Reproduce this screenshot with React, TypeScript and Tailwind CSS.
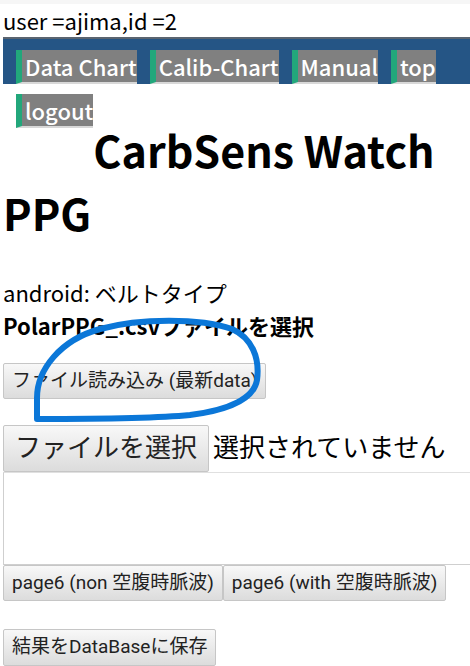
const navItems = ["Data Chart", "Calib-Chart", "Manual", "top", "logout"];

function Btn({ children, className = "" }: { children: React.ReactNode; className?: string }) {
  return (
    <button
      className={`border border-[#c6c6c6] rounded-[2px] bg-gradient-to-b from-[#f8f8f8] to-[#dcdcdc] text-[#222] font-['Roboto','Noto_Sans_CJK_JP',sans-serif] ${className}`}
    >
      {children}
    </button>
  );
}

export default function App() {
  return (
    <div className="relative w-[470px] h-[666px] overflow-hidden bg-white text-black font-['Noto_Sans_CJK_JP','Noto_Sans',sans-serif]">
      <div className="h-[4px] bg-[#f6f6f6]" />
      <p className="pl-[3px] text-[22px] leading-[33px]">user =ajima,id =2</p>
      <nav className="ml-[3px] h-[47px] bg-[#255585] border-t-2 border-[#5a6470] pt-[11px]">
        <ul>
          {navItems.map((item) => (
            <li
              key={item}
              className="float-left ml-[13px] mb-[10px] border-l-[6px] border-b-2 border-l-[#22a77b] border-b-[#d8d8d8] bg-[#808080] pl-[3px] text-[22px] leading-[32px] font-medium text-white"
            >
              {item}
            </li>
          ))}
        </ul>
      </nav>
      <h1 className="mt-[34px] pl-[3px] text-[43px] leading-[63px] font-bold">CarbSens Watch PPG</h1>
      <div className="mt-[32px] pl-[3px] text-[22px] leading-[33px]">
        <p>android: ベルトタイプ</p>
        <p className="font-bold">PolarPPG_.csvファイルを選択</p>
      </div>
      <div className="mt-[21px] pl-[3px]">
        <Btn className="h-[36px] px-[8px] text-[19px]">ファイル読み込み (最新data)</Btn>
      </div>
      <div className="mt-[26px] pl-[3px] flex items-center">
        <Btn className="h-[47px] px-[11px] text-[26px]">ファイルを選択</Btn>
        <span className="ml-[4px] text-[26px] font-['Roboto','Noto_Sans_CJK_JP',sans-serif]">選択されていません</span>
      </div>
      <div className="ml-[3px] h-[93px] w-[480px] border border-[#cfcfcf] border-t-[#e0e0e0]" />
      <div className="pl-[3px] flex">
        <Btn className="h-[36px] px-[8px] text-[19px]">page6 (non 空腹時脈波)</Btn>
        <Btn className="h-[36px] px-[8px] text-[19px]">page6 (with 空腹時脈波)</Btn>
      </div>
      <div className="mt-[28px] pl-[3px]">
        <Btn className="h-[37px] px-[8px] text-[19px]">結果をDataBaseに保存</Btn>
      </div>
      <svg className="absolute left-0 top-0 pointer-events-none" width="470" height="666">
        <path
          d="M37 419 L37 398 C37 370 60 340 100 329 C140 318 200 318 232 329 C252 338 260 358 257 380 C254 398 230 410 190 415 C150 419 90 419 37 419"
          fill="none"
          stroke="#0b77d8"
          strokeWidth="6"
          strokeLinecap="round"
          strokeLinejoin="round"
        />
      </svg>
    </div>
  );
}
